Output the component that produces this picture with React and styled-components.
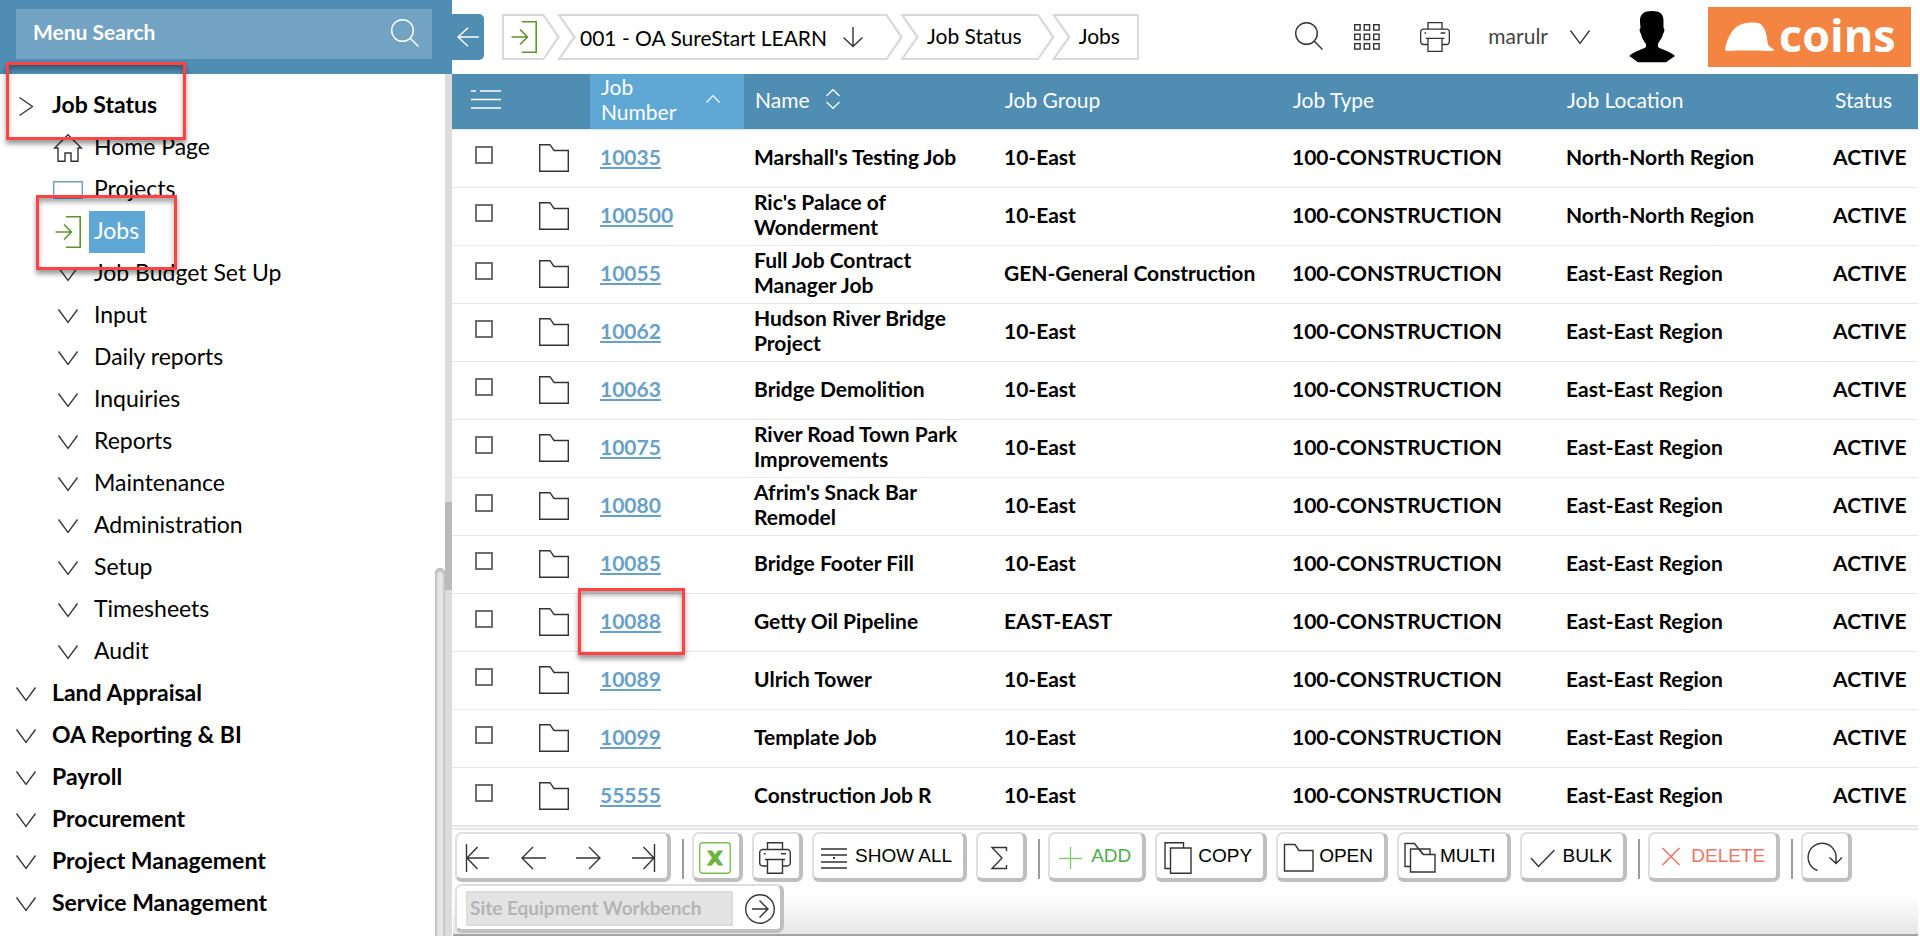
import React from 'react';
import styled, { createGlobalStyle, css } from 'styled-components';

const color = {
  bar: '#4f8db3',
  barLight: '#72a3c2',
  active: '#5fa8d6',
  line: '#e6e6e6',
  crumb: '#d9d9d9',
  link: '#68a0c8',
  green: '#5f9330',
  ink: '#333333',
  mark: '#ff4343',
  brand: '#f38441',
};

const GlobalStyle = createGlobalStyle`
  *, *::before, *::after { box-sizing: border-box; }
  body {
    margin: 0;
    background: #fff;
    color: #000;
    font-family: Lato, "Liberation Sans", sans-serif;
    font-size: 21px;
    line-height: 25px;
  }
  button { font: inherit; color: inherit; background: none; border: 0; padding: 0; cursor: pointer; }
  a { color: inherit; text-decoration: none; }
  ul, ol { list-style: none; margin: 0; padding: 0; }
  svg { display: block; overflow: visible; flex: none; }
`;

/* ---------- icons ---------- */

const Icon = ({ w = 32, h = 32, stroke = color.ink, sw = 1.4, children }) => (
  <svg width={w} height={h} viewBox={`0 0 ${w} ${h}`} fill="none" stroke={stroke} strokeWidth={sw} aria-hidden="true">
    {children}
  </svg>
);

const ChevronDown = () => <Icon w={20} h={14} sw={1.3}><path d="M.5.5 10 13.5 19.5.5" /></Icon>;
const ChevronRight = () => <Icon w={14} h={19} sw={1.3}><path d="M.5.5 13.5 9.5.5 18.5" /></Icon>;
const HomeIcon = () => (
  <Icon w={28} h={28}><path d="M.7 14 14 .7 27.3 14H24v13.3h-7V19h-6v8.3H4V14Z" /></Icon>
);
const ScreenIcon = () => <Icon w={30} h={18} stroke={color.link}><path d="M.7 17.3V.7h28.6v16.6Z" /></Icon>;
const EnterIcon = () => (
  <Icon w={26} h={32} stroke={color.green} sw={1.6}>
    <path d="M11 .8h14.2v30.4H11M.5 16h16M9 8.5l7.5 7.5L9 23.5" />
  </Icon>
);
const SearchIcon = ({ stroke }) => (
  <Icon w={28} h={28} stroke={stroke}><circle cx="11.5" cy="11.5" r="10.8" /><path d="m19 19 8.5 8.5" /></Icon>
);
const BackIcon = () => <Icon w={22} h={20} stroke="#fff"><path d="M22 10H1M11 .8 1 10l10 9.2" /></Icon>;
const DownArrow = () => <Icon w={20} h={20}><path d="M10 0v19.5M.5 10.5l9.5 9 9.5-9" /></Icon>;
const GridIcon = () => (
  <Icon w={26} h={26}>
    {[0.7, 10.2, 19.7].map((y) => [0.7, 10.2, 19.7].map((x) => (
      <rect key={`${x}-${y}`} x={x} y={y} width="5.4" height="5.4" />
    )))}
  </Icon>
);
const PrinterIcon = ({ size = 32 }) => (
  <svg width={size} height={size} viewBox="0 0 32 32" fill="none" stroke={color.ink} strokeWidth="1.4" aria-hidden="true">
    <path d="M8.5 7.5V.7h15v6.8M8.5 24H3.7a3 3 0 0 1-3-3V10.5a3 3 0 0 1 3-3h24.600a3 3 0 0 1 3 3V21a3 3 0 0 1-3 3h-4.800" />
    <path d="M8.500 17.500h15v13.800h-15ZM6 17.500h20M22 11.700h5M4.800 11.700h1.800" />
  </svg>
);
const ListIcon = () => (
  <Icon w={30} h={19} stroke="#fff" sw={1.5}><path d="M0 1h5M9 1h21M0 9.500h30M0 18h30" /></Icon>
);
const SortUp = () => <Icon w={14} h={8} stroke="#fff" sw={1.2}><path d="M.5 7.500 7 .7l6.500 6.800" /></Icon>;
const SortBoth = () => (
  <Icon w={14} h={20} stroke="#fff" sw={1.2}><path d="M.5 7 7 .7 13.500 7M.5 13 7 19.300 13.500 13" /></Icon>
);
const FolderIcon = () => <Icon w={30} h={28}><path d="M.7.7H11L15 6.500h14.300v20.800H.7Z" /></Icon>;
const AvatarIcon = () => (
  <svg width="48" height="54" viewBox="0 0 48 54" role="img" aria-label="User">
    <path d="M24 1C32 1 36 4 35.500 12v6c1.500 1 1 4-.5 6-1 5-4 7-5 10v3c4 3 12 4 17 9l-9 6.300H10L1.300 46C6 41 14 40 18 37v-3c-2-3-4-5-5-10-1.500-2-2-5-.5-6L12 12C11.500 4 16 1 24 1Z" />
  </svg>
);
const HelmetIcon = () => (
  <svg width="50" height="30" viewBox="0 0 50 30" fill="#fff" aria-hidden="true">
    <path d="M0 28C1 20 5 10 12 4.500 17 1 27-.5 33 1c4 1 5 4 7 7 2 5 2 10 3 14.500 1 2 4 3.500 6.500 5.500l-2 1C36 29 24 28 2 29Z" />
  </svg>
);

const FirstIcon = () => <Icon><path d="M4.500 2v28M27 16H5M15.500 5 5 16l10.500 11" /></Icon>;
const PrevIcon = () => <Icon><path d="M29 16H5M16 5 5 16l11 11" /></Icon>;
const NextIcon = () => <Icon><path d="M4 16h24M17 5l11 11-11 11" /></Icon>;
const LastIcon = () => <Icon><path d="M27.500 2v28M5 16h22M16.500 5 27 16 16.500 27" /></Icon>;
const ExcelIcon = () => (
  <Icon stroke="#7fbd52">
    <rect x=".7" y=".7" width="30.600" height="30.600" rx="3" />
    <text x="16" y="23" textAnchor="middle" fill="#6db33f" stroke="#6db33f" strokeWidth="1" fontFamily="DejaVu Sans, sans-serif" fontWeight="700" fontSize="20">X</text>
  </Icon>
);
const RowsIcon = () => (
  <Icon><path d="M2 7h26M2 13h26M2 20h26M2 26h26" /><rect x="14" y="15" width="2" height="2" fill={color.ink} stroke="none" /></Icon>
);
const SumIcon = () => <Icon><path d="M23.500 9V5.500H9L19 16 9 26.500h14.500V23" /></Icon>;
const PlusIcon = () => <Icon stroke="#84cb78"><path d="M15.500 5v22M4 16.500h23" /></Icon>;
const CopyIcon = () => <Icon><path d="M8.500 26.500H3V.7h18.500V6M8.500 6h20.500v25.300H8.500Z" /></Icon>;
const OpenIcon = () => <Icon><path d="M1.500 2.500H12L16 8.500h14v20.500H1.500Z" /></Icon>;
const MultiIcon = () => (
  <Icon><path d="M6.500 24.500H1V1.500h9.500l8.500 11M15 7h11v5.500M6.500 7h8.500l4.500 5.500h11.500V30h-24.500Z" /></Icon>
);
const CheckIcon = () => <Icon><path d="m4 16 7.500 8.500L27.500 8" /></Icon>;
const CrossIcon = () => <Icon stroke="#f07468" sw={1.6}><path d="m7.500 6 17 17M24.500 6l-17 17" /></Icon>;
const RefreshIcon = () => <Icon><path d="M9.500 28.500A14 14 0 1 1 28 17v4M21.500 15.500 28 21.500l6-6" /></Icon>;
const GoIcon = () => (
  <Icon w={30} h={30}><circle cx="15" cy="15" r="14.300" /><path d="M7 15h16M14.500 6.500 23 15l-8.500 8.500" /></Icon>
);

/* ---------- shell ---------- */

const Shell = styled.div`
  display: flex;
  min-height: 100vh;
`;

const Highlight = styled.span`
  position: absolute;
  z-index: 2;
  inset: ${(p) => p.$inset};
  border: 3px solid ${color.mark};
  box-shadow: 0 4px 5px rgba(0, 0, 0, 0.4), inset 0 4px 5px rgba(0, 0, 0, 0.35);
  pointer-events: none;
`;

/* ---------- sidebar ---------- */

const Sidebar = styled.aside`
  flex: 0 0 452px;
  display: flex;
  flex-direction: column;
`;

const SearchBar = styled.form`
  height: 74px;
  padding: 9px 20px 15px 16px;
  background: ${color.bar};
`;

const SearchField = styled.label`
  display: flex;
  align-items: center;
  height: 50px;
  padding: 0 13px 3px 17px;
  background: ${color.barLight};
`;

const SearchInput = styled.input`
  flex: 1;
  min-width: 0;
  border: 0;
  padding: 0 0 2px;
  background: none;
  color: #fff;
  font: inherit;
  font-weight: 700;
  outline: none;
  &::placeholder { color: #fff; opacity: 1; }
`;

const SidebarBody = styled.div`
  flex: 1;
  display: flex;
`;

const Menu = styled.nav`
  flex: 1;
  padding: 11px 0;
  font-size: 23px;
`;

const MenuItem = styled.li`
  position: relative;
`;

const MenuLink = styled.a`
  display: flex;
  align-items: center;
  gap: 6px;
  height: 42px;
  padding-left: ${(p) => (p.$child ? 53 : 11)}px;
  font-weight: ${(p) => (p.$child ? 400 : 700)};
`;

const MenuIcon = styled.span`
  flex: 0 0 30px;
  display: flex;
  justify-content: center;
`;

const MenuLabel = styled.span`
  height: 42px;
  padding: 0 6px 0 5px;
  line-height: 38px;
  ${(p) => p.$active && css`
    background: ${color.active};
    color: #fff;
  `}
`;

const ScrollRail = styled.div`
  width: 10px;
  padding-top: 494px;
  display: flex;
`;

const ScrollThumb = styled.div`
  flex: 1;
  border-radius: 5px 5px 0 0;
  background: linear-gradient(90deg, #b9b9b9, #e4e4e4 30%, #e8e8e8 70%, #c4c4c4);
  box-shadow: inset 0 3px 3px #b9b9b9;
`;

const Splitter = styled.div`
  width: 7px;
  padding-top: 428px;
  background: #dcdcdc;
`;

const SplitterGrip = styled.div`
  height: 88px;
  background: #bababa;
`;

/* ---------- top bar ---------- */

const Main = styled.main`
  flex: 1;
  min-width: 0;
  display: flex;
  flex-direction: column;
  padding-right: 2px;
`;

const TopBar = styled.header`
  display: flex;
  align-items: center;
  height: 74px;
  padding-right: 7px;
`;

const CollapseButton = styled.button`
  display: flex;
  align-items: center;
  justify-content: center;
  width: 32px;
  height: 46px;
  border-radius: 0 5px 5px 0;
  background: ${color.bar};
`;

const Crumbs = styled.ol`
  display: flex;
  margin-left: 18px;
`;

const outline = {
  start: 'polygon(0 0, calc(100% - 16px) 0, 100% 50%, calc(100% - 16px) 100%, 0 100%)',
  middle: 'polygon(0 0, calc(100% - 16px) 0, 100% 50%, calc(100% - 16px) 100%, 0 100%, 16px 50%)',
  end: 'polygon(0 0, 100% 0, 100% 100%, 0 100%, 16px 50%)',
};
const inner = {
  start: 'polygon(2px 2px, calc(100% - 17px) 2px, calc(100% - 3px) 50%, calc(100% - 17px) calc(100% - 2px), 2px calc(100% - 2px))',
  middle: 'polygon(4px 2px, calc(100% - 17px) 2px, calc(100% - 3px) 50%, calc(100% - 17px) calc(100% - 2px), 4px calc(100% - 2px), 19px 50%)',
  end: 'polygon(4px 2px, calc(100% - 2px) 2px, calc(100% - 2px) calc(100% - 2px), 4px calc(100% - 2px), 19px 50%)',
};

const Crumb = styled.li`
  position: relative;
  height: 46px;
  background: ${color.crumb};
  clip-path: ${(p) => outline[p.$shape]};
  & + & { margin-left: -3px; }
  &::before {
    content: '';
    position: absolute;
    inset: 0;
    background: #fff;
    clip-path: ${(p) => inner[p.$shape]};
  }
`;

const CrumbLink = styled.a`
  position: relative;
  display: flex;
  align-items: center;
  gap: 16px;
  height: 46px;
  padding: ${(p) => p.$pad};
`;

const TopTools = styled.div`
  display: flex;
  align-items: center;
  gap: 38px;
  margin-left: auto;
`;

const ToolPair = styled.div`
  display: flex;
  align-items: center;
  gap: ${(p) => p.$gap}px;
`;

const TopButton = styled.button`
  display: flex;
  align-items: center;
  justify-content: center;
  width: 30px;
  height: 46px;
  padding-bottom: ${(p) => (p.$raised ? 2 : 0)}px;
`;

const UserButton = styled.button`
  display: flex;
  align-items: center;
  gap: 22px;
  color: #444;
`;

const UserName = styled.span`
  padding-bottom: 4px;
`;

const Logo = styled.a`
  display: flex;
  align-items: center;
  gap: 4px;
  width: 203px;
  height: 60px;
  padding-left: 17px;
  background: ${color.brand};
  color: #fff;
`;

const LogoText = styled.span`
  padding-bottom: 6px;
  font: 700 45px/45px "Open Sans", "Noto Sans", sans-serif;
`;

/* ---------- table ---------- */

const TableArea = styled.section`
  flex: 1;
  border-bottom: 1px solid ${color.line};
`;

const Table = styled.table`
  width: 100%;
  table-layout: fixed;
  border-collapse: separate;
  border-spacing: 0;
`;

const Col = styled.col`
  width: ${(p) => p.$w}px;
`;

const HeadCell = styled.th`
  height: 56px;
  padding: 0 11px 5px ${(p) => p.$left ?? 11}px;
  border-bottom: 1px solid ${color.line};
  background: ${(p) => (p.$sorted ? color.active : color.bar)};
  background-clip: padding-box;
  color: #fff;
  font-weight: 400;
  text-align: left;
`;

const SortButton = styled.button`
  display: flex;
  align-items: center;
  width: 100%;
  gap: 16px;
  text-align: left;
`;

const SortLabel = styled.span`
  width: ${(p) => (p.$narrow ? '89px' : 'auto')};
`;

const Cell = styled.td`
  height: 58px;
  padding: 0 11px ${(p) => p.$bottom ?? 5}px ${(p) => p.$left ?? 10}px;
  border-bottom: 1px solid ${color.line};
  font-weight: 700;
  vertical-align: middle;
`;

const Checkbox = styled.input`
  appearance: none;
  display: block;
  width: 18px;
  height: 18px;
  margin: 0;
  border: 2px solid #6e6e6e;
  background: #fff;
  &:checked { background: ${color.bar}; }
`;

const JobLink = styled.a`
  position: relative;
  color: ${color.link};
  text-decoration: underline;
  text-decoration-thickness: 2px;
  text-underline-offset: 2px;
`;

/* ---------- bottom toolbar ---------- */

const BottomBar = styled.footer`
  display: flex;
  flex-direction: column;
  gap: 2px;
  margin: 1px 0 0 1px;
  padding: 2px 0 1px 2px;
  border-top: 2px solid ${color.line};
  border-bottom: 2px solid #a3a3a3;
  background: linear-gradient(#fff 65px, #e6e6e6);
`;

const ButtonRow = styled.div`
  display: flex;
  gap: 9px;
`;

const raised = css`
  display: flex;
  align-items: center;
  border: solid;
  border-width: 2px 4px 4px 2px;
  border-color: #dedede #bfbfbf #bfbfbf #dedede;
  border-radius: 7px;
  background: #fff;
`;

const ButtonGroup = styled.div`
  ${raised}
  gap: 23px;
  height: 50px;
  padding: 4px 8px 0 5px;
`;

const ToolButton = styled.button`
  ${raised}
  gap: 4px;
  height: 50px;
  padding: 0 ${(p) => (p.$labelled ? 11 : 8)}px 0 5px;
  color: ${(p) => p.$tone || '#000'};
  font: 19px/22px "Liberation Sans", Arial, sans-serif;
  white-space: nowrap;
`;

const ToolGlyph = styled.span`
  margin-top: 4px;
`;

const Divider = styled.span`
  width: 2px;
  height: 40px;
  margin: 7px -1px 0 2px;
  background: #9c9c9c;
`;

const QuickLaunch = styled.form`
  ${raised}
  align-self: flex-start;
  gap: 12px;
  height: 49px;
  padding: 2px 5px 0 9px;
`;

const QuickInput = styled.input`
  width: 267px;
  height: 35px;
  padding: 0 2px 3px;
  border: 2px solid #dcdcdc;
  background: #e3e3e3;
  color: #b5b5b5;
  font: 700 19px/25px Lato, "Liberation Sans", sans-serif;
  &::placeholder { color: #b5b5b5; opacity: 1; }
`;

/* ---------- data ---------- */

const jobStatusItems = [
  { label: 'Home Page', icon: <HomeIcon /> },
  { label: 'Projects', icon: <ScreenIcon /> },
  { label: 'Jobs', icon: <EnterIcon />, active: true },
  ...['Job Budget Set Up', 'Input', 'Daily reports', 'Inquiries', 'Reports', 'Maintenance', 'Administration', 'Setup', 'Timesheets', 'Audit']
    .map((label) => ({ label, icon: <ChevronDown /> })),
];

const modules = ['Land Appraisal', 'OA Reporting & BI', 'Payroll', 'Procurement', 'Project Management', 'Service Management'];

const columnWidths = [82, 56, 154, 250, 288, 274, 267, 95];

const jobs = [
  ['10035', "Marshall's Testing Job", '10-East', 'North-North Region'],
  ['100500', "Ric's Palace of Wonderment", '10-East', 'North-North Region'],
  ['10055', 'Full Job Contract Manager Job', 'GEN-General Construction', 'East-East Region'],
  ['10062', 'Hudson River Bridge Project', '10-East', 'East-East Region'],
  ['10063', 'Bridge Demolition', '10-East', 'East-East Region'],
  ['10075', 'River Road Town Park Improvements', '10-East', 'East-East Region'],
  ['10080', "Afrim's Snack Bar Remodel", '10-East', 'East-East Region'],
  ['10085', 'Bridge Footer Fill', '10-East', 'East-East Region'],
  ['10088', 'Getty Oil Pipeline', 'EAST-EAST', 'East-East Region'],
  ['10089', 'Ulrich Tower', '10-East', 'East-East Region'],
  ['10099', 'Template Job', '10-East', 'East-East Region'],
  ['55555', 'Construction Job R', '10-East', 'East-East Region'],
];

const MenuRow = ({ label, icon, child, active }) => (
  <MenuLink href="#" $child={child}>
    <MenuIcon>{icon}</MenuIcon>
    <MenuLabel $active={active}>{label}</MenuLabel>
  </MenuLink>
);

const Tool = ({ icon, label, name, tone }) => (
  <ToolButton type="button" $labelled={!!label} $tone={tone} aria-label={label || name}>
    <ToolGlyph>{icon}</ToolGlyph>
    {label}
  </ToolButton>
);

export default function App() {
  return (
    <>
      <GlobalStyle />
      <Shell>
        <Sidebar>
          <SearchBar>
            <SearchField>
              <SearchInput type="text" placeholder="Menu Search" aria-label="Menu Search" />
              <SearchIcon stroke="#fff" />
            </SearchField>
          </SearchBar>
          <SidebarBody>
            <Menu aria-label="Modules">
              <ul>
                <MenuItem>
                  <MenuRow label="Job Status" icon={<ChevronRight />} />
                  <ul>
                    {jobStatusItems.map((item) => (
                      <MenuItem key={item.label}>
                        <MenuRow {...item} child />
                        {item.active && <Highlight $inset="-16px 258px -17px 36px" />}
                      </MenuItem>
                    ))}
                  </ul>
                  <Highlight $inset="-23px 249px 533px 6px" />
                </MenuItem>
                {modules.map((label) => (
                  <MenuItem key={label}>
                    <MenuRow label={label} icon={<ChevronDown />} />
                  </MenuItem>
                ))}
              </ul>
            </Menu>
            <ScrollRail><ScrollThumb /></ScrollRail>
            <Splitter><SplitterGrip /></Splitter>
          </SidebarBody>
        </Sidebar>

        <Main>
          <TopBar>
            <CollapseButton type="button" aria-label="Collapse menu"><BackIcon /></CollapseButton>
            <Crumbs>
              <Crumb $shape="start"><CrumbLink href="#" aria-label="Go to" $pad="0 23px 0 9px"><EnterIcon /></CrumbLink></Crumb>
              <Crumb $shape="middle"><CrumbLink href="#" $pad="0 40px 0 23px">001 - OA SureStart LEARN <DownArrow /></CrumbLink></Crumb>
              <Crumb $shape="middle"><CrumbLink href="#" $pad="0 33px 4px 27px">Job Status</CrumbLink></Crumb>
              <Crumb $shape="end"><CrumbLink href="#" $pad="0 19px 4px 27px">Jobs</CrumbLink></Crumb>
            </Crumbs>
            <TopTools>
              <ToolPair $gap={28}>
                <TopButton type="button" aria-label="Search" $raised><SearchIcon /></TopButton>
                <TopButton type="button" aria-label="Apps"><GridIcon /></TopButton>
              </ToolPair>
              <TopButton type="button" aria-label="Print"><PrinterIcon size={30} /></TopButton>
              <UserButton type="button"><UserName>marulr</UserName><ChevronDown /></UserButton>
              <ToolPair $gap={32}>
                <AvatarIcon />
                <Logo href="#"><HelmetIcon /><LogoText>coins</LogoText></Logo>
              </ToolPair>
            </TopTools>
          </TopBar>

          <TableArea>
            <Table>
              <colgroup>{columnWidths.map((w, i) => <Col key={i} $w={w} />)}</colgroup>
              <thead>
                <tr>
                  <HeadCell $left={19}><ListIcon /></HeadCell>
                  <HeadCell />
                  <HeadCell $sorted aria-sort="ascending">
                    <SortButton type="button"><SortLabel $narrow>Job Number</SortLabel><SortUp /></SortButton>
                  </HeadCell>
                  <HeadCell><SortButton type="button"><SortLabel>Name</SortLabel><SortBoth /></SortButton></HeadCell>
                  <HeadCell>Job Group</HeadCell>
                  <HeadCell>Job Type</HeadCell>
                  <HeadCell>Job Location</HeadCell>
                  <HeadCell $left={12}>Status</HeadCell>
                </tr>
              </thead>
              <tbody>
                {jobs.map(([number, name, group, location]) => (
                  <tr key={number}>
                    <Cell $left={23} $bottom={7}><Checkbox type="checkbox" aria-label={`Select job ${number}`} /></Cell>
                    <Cell $left={5} $bottom={1}><FolderIcon /></Cell>
                    <Cell>
                      <JobLink href="#">
                        {number}
                        {number === '10088' && <Highlight $inset="-20px -24px -22px -22px" />}
                      </JobLink>
                    </Cell>
                    <Cell>{name}</Cell>
                    <Cell>{group}</Cell>
                    <Cell>100-CONSTRUCTION</Cell>
                    <Cell>{location}</Cell>
                    <Cell>ACTIVE</Cell>
                  </tr>
                ))}
              </tbody>
            </Table>
          </TableArea>

          <BottomBar>
            <ButtonRow>
              <ButtonGroup>
                <button type="button" aria-label="First"><FirstIcon /></button>
                <button type="button" aria-label="Previous"><PrevIcon /></button>
                <button type="button" aria-label="Next"><NextIcon /></button>
                <button type="button" aria-label="Last"><LastIcon /></button>
              </ButtonGroup>
              <Divider />
              <Tool icon={<ExcelIcon />} name="Export to Excel" />
              <Tool icon={<PrinterIcon />} name="Print" />
              <Tool icon={<RowsIcon />} label="SHOW ALL" />
              <Tool icon={<SumIcon />} name="Totals" />
              <Divider />
              <Tool icon={<PlusIcon />} label="ADD" tone="#4cae4c" />
              <Tool icon={<CopyIcon />} label="COPY" />
              <Tool icon={<OpenIcon />} label="OPEN" />
              <Tool icon={<MultiIcon />} label="MULTI" />
              <Tool icon={<CheckIcon />} label="BULK" />
              <Divider />
              <Tool icon={<CrossIcon />} label="DELETE" tone="#f07468" />
              <Divider />
              <Tool icon={<RefreshIcon />} name="Refresh" />
            </ButtonRow>
            <QuickLaunch>
              <QuickInput type="text" placeholder="Site Equipment Workbench" aria-label="Site Equipment Workbench" />
              <button type="button" aria-label="Go"><GoIcon /></button>
            </QuickLaunch>
          </BottomBar>
        </Main>
      </Shell>
    </>
  );
}
